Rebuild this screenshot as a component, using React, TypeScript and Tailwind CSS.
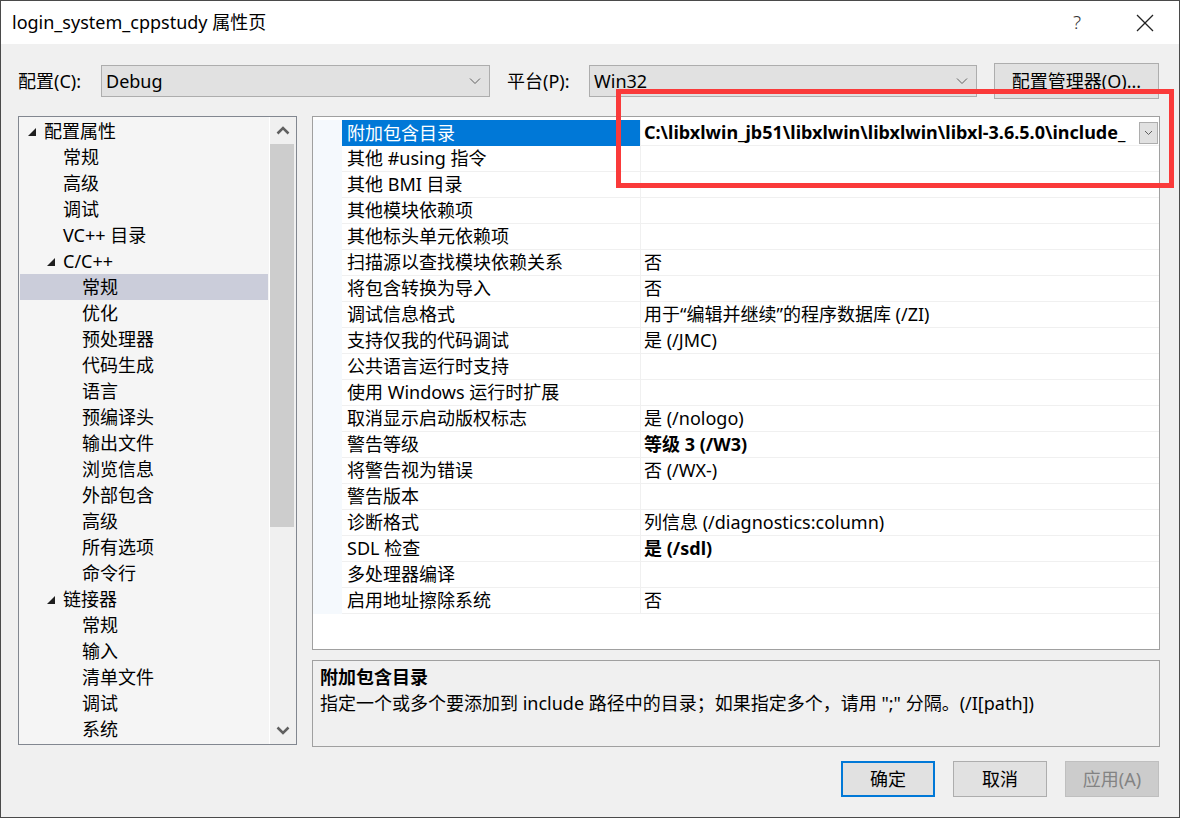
import React from "react";

const FONT = { fontFamily: '"Noto Sans", "Noto Sans CJK SC", sans-serif' };

type TreeItem = { label: string; level: number; arrow?: boolean; selected?: boolean };

const tree: TreeItem[] = [
  { label: "配置属性", level: 0, arrow: true },
  { label: "常规", level: 1 },
  { label: "高级", level: 1 },
  { label: "调试", level: 1 },
  { label: "VC++ 目录", level: 1 },
  { label: "C/C++", level: 1, arrow: true },
  { label: "常规", level: 2, selected: true },
  { label: "优化", level: 2 },
  { label: "预处理器", level: 2 },
  { label: "代码生成", level: 2 },
  { label: "语言", level: 2 },
  { label: "预编译头", level: 2 },
  { label: "输出文件", level: 2 },
  { label: "浏览信息", level: 2 },
  { label: "外部包含", level: 2 },
  { label: "高级", level: 2 },
  { label: "所有选项", level: 2 },
  { label: "命令行", level: 2 },
  { label: "链接器", level: 1, arrow: true },
  { label: "常规", level: 2 },
  { label: "输入", level: 2 },
  { label: "清单文件", level: 2 },
  { label: "调试", level: 2 },
  { label: "系统", level: 2 },
];

type Prop = { name: string; value?: string; bold?: boolean };

const props: Prop[] = [
  { name: "附加包含目录", value: "C:\\libxlwin_jb51\\libxlwin\\libxlwin\\libxl-3.6.5.0\\include_", bold: true },
  { name: "其他 #using 指令" },
  { name: "其他 BMI 目录" },
  { name: "其他模块依赖项" },
  { name: "其他标头单元依赖项" },
  { name: "扫描源以查找模块依赖关系", value: "否" },
  { name: "将包含转换为导入", value: "否" },
  { name: "调试信息格式", value: "用于“编辑并继续”的程序数据库 (/ZI)" },
  { name: "支持仅我的代码调试", value: "是 (/JMC)" },
  { name: "公共语言运行时支持" },
  { name: "使用 Windows 运行时扩展" },
  { name: "取消显示启动版权标志", value: "是 (/nologo)" },
  { name: "警告等级", value: "等级 3 (/W3)", bold: true },
  { name: "将警告视为错误", value: "否 (/WX-)" },
  { name: "警告版本" },
  { name: "诊断格式", value: "列信息 (/diagnostics:column)" },
  { name: "SDL 检查", value: "是 (/sdl)", bold: true },
  { name: "多处理器编译" },
  { name: "启用地址擦除系统", value: "否" },
];

function Chevron() {
  return (
    <svg width="12" height="8" viewBox="0 0 12 8">
      <polyline points="1,1.5 6,6.5 11,1.5" fill="none" stroke="#606060" strokeWidth="1" />
    </svg>
  );
}

function Triangle() {
  return (
    <svg width="8" height="8" viewBox="0 0 8 8" className="mt-[2px]">
      <polygon points="8,0 8,8 0,8" fill="#1e1e1e" />
    </svg>
  );
}

function Select({ value, width }: { value: string; width: string }) {
  return (
    <div className={`${width} h-[32px] bg-[#e1e1e1] border border-[#adadad] flex items-center pl-[4px] pr-[8px]`}>
      <span className="flex-1 text-[18px] text-black leading-none">{value}</span>
      <Chevron />
    </div>
  );
}

export default function App() {
  return (
    <div
      className="relative w-[1180px] h-[818px] bg-[#f0f0f0] border border-[#4a4a4a] flex flex-col overflow-hidden text-black"
      style={FONT}
    >
      {/* Title bar */}
      <div className="h-[43px] bg-white flex items-center pl-[11px] shrink-0">
        <span className="text-[18px] flex-1">login_system_cppstudy 属性页</span>
        <span className="text-[19px] text-[#333] mr-[55px] font-light">?</span>
        <svg width="18" height="18" viewBox="0 0 18 18" className="mr-[25px]">
          <line x1="1" y1="1" x2="17" y2="17" stroke="#222" strokeWidth="1.2" />
          <line x1="17" y1="1" x2="1" y2="17" stroke="#222" strokeWidth="1.2" />
        </svg>
      </div>

      <div className="flex flex-col px-[17px]">
        {/* Config row */}
        <div className="mt-[19px] h-[36px] flex items-center">
          <span className="w-[83px] text-[18px]">配置(C):</span>
          <Select value="Debug" width="w-[389px]" />
          <span className="ml-[17px] w-[82px] text-[18px]">平台(P):</span>
          <Select value="Win32" width="w-[388px]" />
          <div className="ml-[17px] w-[165px] h-[36px] bg-[#e1e1e1] border border-[#adadad] flex items-center justify-center text-[18px]">
            配置管理器(O)...
          </div>
        </div>

        {/* Main */}
        <div className="mt-[17px] flex">
          {/* Tree */}
          <div className="w-[279px] h-[629px] border border-[#828790] bg-[#f5f5f5] flex">
            <div className="flex-1 pt-[1px] border-r border-white">
              {tree.map((t, i) => (
                <div
                  key={i}
                  className={`h-[26px] flex items-center text-[18px] mx-[1px] ${t.selected ? "bg-[#cbcdda]" : ""}`}
                  style={{ paddingLeft: 8 + t.level * 19 }}
                >
                  <span className="w-[16px] flex items-center">{t.arrow ? <Triangle /> : null}</span>
                  <span>{t.label}</span>
                </div>
              ))}
            </div>
            <div className="w-[26px] bg-[#f0f0f0] flex flex-col">
              <div className="h-[27px] flex items-center justify-center">
                <svg width="14" height="9" viewBox="0 0 14 9">
                  <polyline points="1.5,7.5 7,2 12.5,7.5" fill="none" stroke="#606060" strokeWidth="2.5" />
                </svg>
              </div>
              <div className="h-[383px] w-[24px] bg-[#cdcdcd]" />
              <div className="flex-1" />
              <div className="h-[27px] flex items-center justify-center">
                <svg width="14" height="9" viewBox="0 0 14 9">
                  <polyline points="1.5,1.5 7,7 12.5,1.5" fill="none" stroke="#606060" strokeWidth="2.5" />
                </svg>
              </div>
            </div>
          </div>

          {/* Right column */}
          <div className="ml-[15px] w-[848px] flex flex-col">
            <div className="h-[534px] border border-[#a0a0a0] bg-white pt-[3px]">
              {props.map((p, i) => {
                const sel = i === 0;
                return (
                  <div key={i} className="h-[26px] flex text-[18px]">
                    <div className="w-[29px] bg-[#f5f9fd]" />
                    <div
                      className={`w-[299px] flex items-center pl-[5px] border-r border-[#f0f0f0] ${
                        sel ? "bg-[#0078d7] text-white" : "border-b"
                      }`}
                    >
                      <span className="whitespace-nowrap">{p.name}</span>
                    </div>
                    <div className="flex-1 flex items-center pl-[3px] border-b border-[#f0f0f0] min-w-0">
                      <span className={`whitespace-nowrap flex-1 ${p.bold ? "font-bold" : ""}`}>
                        {p.value ?? ""}
                      </span>
                      {sel && (
                        <div className="shrink-0 w-[19px] h-[22px] mr-[1px] bg-[#e1e1e1] border border-[#adadad] flex items-center justify-center">
                          <svg width="9" height="6" viewBox="0 0 9 6">
                            <polyline points="1,1 4.5,4.5 8,1" fill="none" stroke="#606060" strokeWidth="1" />
                          </svg>
                        </div>
                      )}
                    </div>
                  </div>
                );
              })}
            </div>
            <div className="mt-[10px] h-[87px] border border-[#a0a0a0] bg-[#f0f0f0] px-[7px] pt-[3px]">
              <div className="h-[26px] flex items-center text-[18px] font-bold">附加包含目录</div>
              <div className="h-[26px] flex items-center text-[18px] whitespace-nowrap">
                指定一个或多个要添加到 include 路径中的目录；如果指定多个，请用 ";" 分隔。(/I[path])
              </div>
            </div>
          </div>
        </div>

        {/* Buttons */}
        <div className="mt-[14px] flex justify-end gap-[18px] pr-[3px]">
          <div className="w-[94px] h-[36px] border-2 border-[#0078d7] bg-[#e1e1e1] flex items-center justify-center text-[18px]">
            确定
          </div>
          <div className="w-[94px] h-[36px] border border-[#adadad] bg-[#e1e1e1] flex items-center justify-center text-[18px]">
            取消
          </div>
          <div className="w-[94px] h-[36px] border border-[#bfbfbf] bg-[#cccccc] flex items-center justify-center text-[18px] text-[#838383]">
            应用(A)
          </div>
        </div>
      </div>

      {/* Red annotation rectangle */}
      <div className="absolute left-[615px] top-[88px] w-[558px] h-[99px] border-[5px] border-[#fa3a3a] pointer-events-none" />
    </div>
  );
}
